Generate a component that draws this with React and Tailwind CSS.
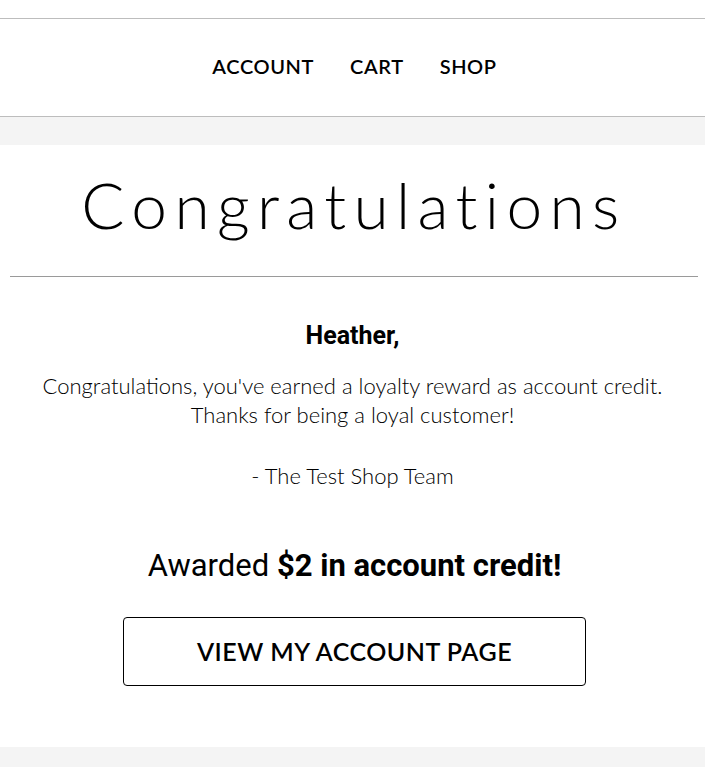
export default function App() {
  return (
    <div className="w-[705px] h-[767px] overflow-hidden bg-white text-black font-['Lato',sans-serif]">
      {/* top strip */}
      <div className="h-[19px] border-b border-[#bdbdbd]" />

      {/* Nav */}
      <nav className="h-[98px] pb-[3px] pl-[4px] flex items-center justify-center gap-[36px] border-b border-[#bdbdbd] text-[20px] font-semibold tracking-[0.03em]">
        <a>ACCOUNT</a>
        <a>CART</a>
        <a>SHOP</a>
      </nav>

      <div className="h-[28px] bg-[#f4f4f4]" />

      {/* Hero */}
      <div className="pl-[10px] pr-[7px]">
        <h1 className="pt-[20px] pb-[31px] text-center text-[64px] font-light tracking-[0.115em] leading-[80px]">
          Congratulations
        </h1>
        <div className="border-t border-[#9a9a9a]" />
      </div>

      <div className="text-center">
        <p className="mt-[44px] text-[25px] font-bold font-['Roboto',sans-serif] leading-[30px]">Heather,</p>
        <p className="mt-[20px] text-[22px] font-light leading-[29px] text-black">
          Congratulations, you've earned a loyalty reward as account credit.
          <br />
          Thanks for being a loyal customer!
        </p>
        <p className="mt-[32px] text-[22px] font-light leading-[29px]">- The Test Shop Team</p>

        <p className="mt-[58px] pl-[4px] text-[31px] font-['Roboto',sans-serif] leading-[36px]">
          Awarded <strong className="font-bold">$2 in account credit!</strong>
        </p>

        <div className="mt-[33px] flex justify-center">
          <button className="ml-[4px] w-[463px] h-[69px] rounded-[4px] border border-black text-[25px] font-semibold tracking-[0.02em]">
            VIEW MY ACCOUNT PAGE
          </button>
        </div>
      </div>

      <div className="mt-[61px] h-[30px] bg-[#f4f4f4]" />
    </div>
  );
}
